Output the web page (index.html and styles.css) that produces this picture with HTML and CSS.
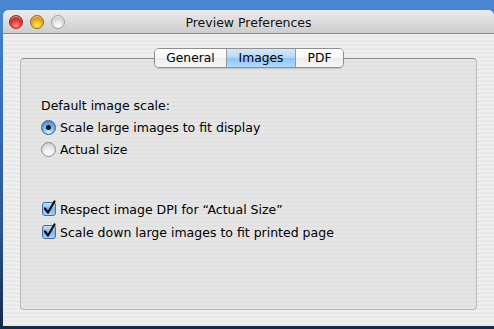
FILE: index.html
```html
<!DOCTYPE html>
<html>
<head>
<meta charset="utf-8">
<link rel="stylesheet" href="styles.css">
</head>
<body>
<div class="desktop">
  <div class="window">
    <div class="titlebar">
      <div class="lights">
        <span class="light red"></span>
        <span class="light yellow"></span>
        <span class="light grey"></span>
      </div>
      <div class="title">Preview Preferences</div>
    </div>
    <div class="content">
      <div class="tabs">
        <span class="tab tab-general">General</span><span class="tab tab-images selected">Images</span><span class="tab tab-pdf">PDF</span>
      </div>
      <div class="box">
        <div class="row label">Default image scale:</div>
        <div class="row"><span class="radio on"></span>Scale large images to fit display</div>
        <div class="row"><span class="radio"></span>Actual size</div>
        <div class="row check-first"><svg class="check" viewBox="0 0 16 16" width="16" height="16"><defs><linearGradient id="cb" x1="0" y1="0" x2="0" y2="1"><stop offset="0" stop-color="#cfe6fb"/><stop offset="0.5" stop-color="#7db7ee"/><stop offset="1" stop-color="#a9d4fa"/></linearGradient></defs><rect x="1.5" y="2.5" width="13" height="13" rx="2.5" fill="url(#cb)" stroke="#3f6f9f"/><path d="M4 8.5 L7 12.5 L13.5 1.5" fill="none" stroke="#111" stroke-width="2.2" stroke-linecap="round" stroke-linejoin="round"/></svg>Respect image DPI for “Actual Size”</div>
        <div class="row"><svg class="check" viewBox="0 0 16 16" width="16" height="16"><rect x="1.5" y="2.5" width="13" height="13" rx="2.5" fill="url(#cb)" stroke="#3f6f9f"/><path d="M4 8.5 L7 12.5 L13.5 1.5" fill="none" stroke="#111" stroke-width="2.2" stroke-linecap="round" stroke-linejoin="round"/></svg>Scale down large images to fit printed page</div>
      </div>
    </div>
  </div>
</div>
</body>
</html>
```
FILE: styles.css
```css
html, body {
  margin: 0;
  padding: 0;
}
body {
  width: 494px;
  height: 329px;
  overflow: hidden;
  background: linear-gradient(#4a87d0 0, #3a70b4 30%, #2a5590 70%, #16294a 100%);
  font-family: "DejaVu Sans", "Noto Sans", sans-serif;
  color: #000;
}
.desktop {
  box-sizing: border-box;
  height: 329px;
  padding: 10px 0 3px 3px;
}
.window {
  height: 316px;
  display: flex;
  flex-direction: column;
  border-radius: 6px 6px 0 0;
  overflow: hidden;
  background: repeating-linear-gradient(#efefef 0 2px, #e9e9e9 2px 4px);
}
.titlebar {
  height: 23px;
  flex: none;
  display: grid;
  grid-template-columns: 1fr auto 1fr;
  align-items: center;
  background: linear-gradient(#ececec 0, #dcdcdc 50%, #cdcdcd 100%);
  border-bottom: 1px solid #8c8c8c;
}
.lights {
  display: flex;
  gap: 7px;
  padding-left: 6px;
}
.light {
  width: 14px;
  height: 14px;
  border-radius: 50%;
  box-sizing: border-box;
}
.red {
  background: radial-gradient(circle at 50% 80%, #ff9a8e 0, #e8413a 40%, #9c1410 100%);
  border: 1px solid #8a2622;
  box-shadow: inset 0 2px 1px -1px rgba(255,255,255,0.7);
}
.yellow {
  background: radial-gradient(circle at 50% 80%, #fff07a 0, #f3b31c 45%, #b06a00 100%);
  border: 1px solid #9a6a10;
  box-shadow: inset 0 2px 1px -1px rgba(255,255,255,0.7);
}
.grey {
  background: radial-gradient(circle at 50% 80%, #ffffff 0, #e2e2e2 45%, #b4b4b4 100%);
  border: 1px solid #a0a0a0;
  box-shadow: inset 0 2px 1px -1px rgba(255,255,255,0.9);
}
.title {
  font-size: 12.5px;
  padding-top: 1px;
  color: #111;
}
.content {
  flex: 1;
  display: flex;
  flex-direction: column;
  padding: 14px 17px 16px 17px;
}
.tabs {
  align-self: center;
  display: flex;
  height: 20px;
  position: relative;
  z-index: 1;
  border: 1px solid #8e8e8e;
  border-radius: 5px;
  box-sizing: border-box;
  overflow: hidden;
  box-shadow: 0 1px 1px rgba(0,0,0,0.15);
  margin-left: 1px;
}
.tab {
  display: flex;
  align-items: center;
  justify-content: center;
  font-size: 12.3px;
  background: linear-gradient(#ffffff 0, #f7f7f7 50%, #ececec 51%, #f6f6f6 100%);
}
.tab + .tab {
  border-left: 1px solid #9a9a9a;
}
.tab-general { width: 71px; }
.tab-images { width: 68px; }
.tab-pdf { width: 47px; }
.tab.selected {
  background: linear-gradient(#d3e8fc 0, #b4d7f8 50%, #8fc4f3 51%, #b2dafc 100%);
}
.box {
  flex: 1;
  margin-top: -10px;
  border: 1px solid #b9b9b9;
  border-top-color: #8e8e8e;
  border-radius: 4px;
  background: repeating-linear-gradient(#e6e6e6 0 2px, #e1e1e1 2px 4px);
  padding: 35px 20px 0 20px;
  font-size: 12.5px;
}
.row {
  height: 22px;
  display: flex;
  align-items: center;
  white-space: nowrap;
}
.radio {
  width: 15px;
  height: 15px;
  box-sizing: border-box;
  border-radius: 50%;
  margin-right: 4px;
  flex: none;
  border: 1px solid #8c8c8c;
  background: radial-gradient(circle at 50% 85%, #ffffff 0, #efefef 40%, #c6c6c6 100%);
  position: relative;
}
.radio.on {
  border-color: #34609a;
  background: radial-gradient(circle at 50% 85%, #d6efff 0, #7ab8ef 45%, #3f7fc7 100%);
}
.radio.on::after {
  content: "";
  position: absolute;
  left: 4px;
  top: 4px;
  width: 5px;
  height: 5px;
  border-radius: 50%;
  background: #111;
}
.check {
  flex: none;
  margin-right: 3px;
  margin-top: -2px;
}
.check-first {
  margin-top: 38px;
  margin-bottom: 1px;
}
```
